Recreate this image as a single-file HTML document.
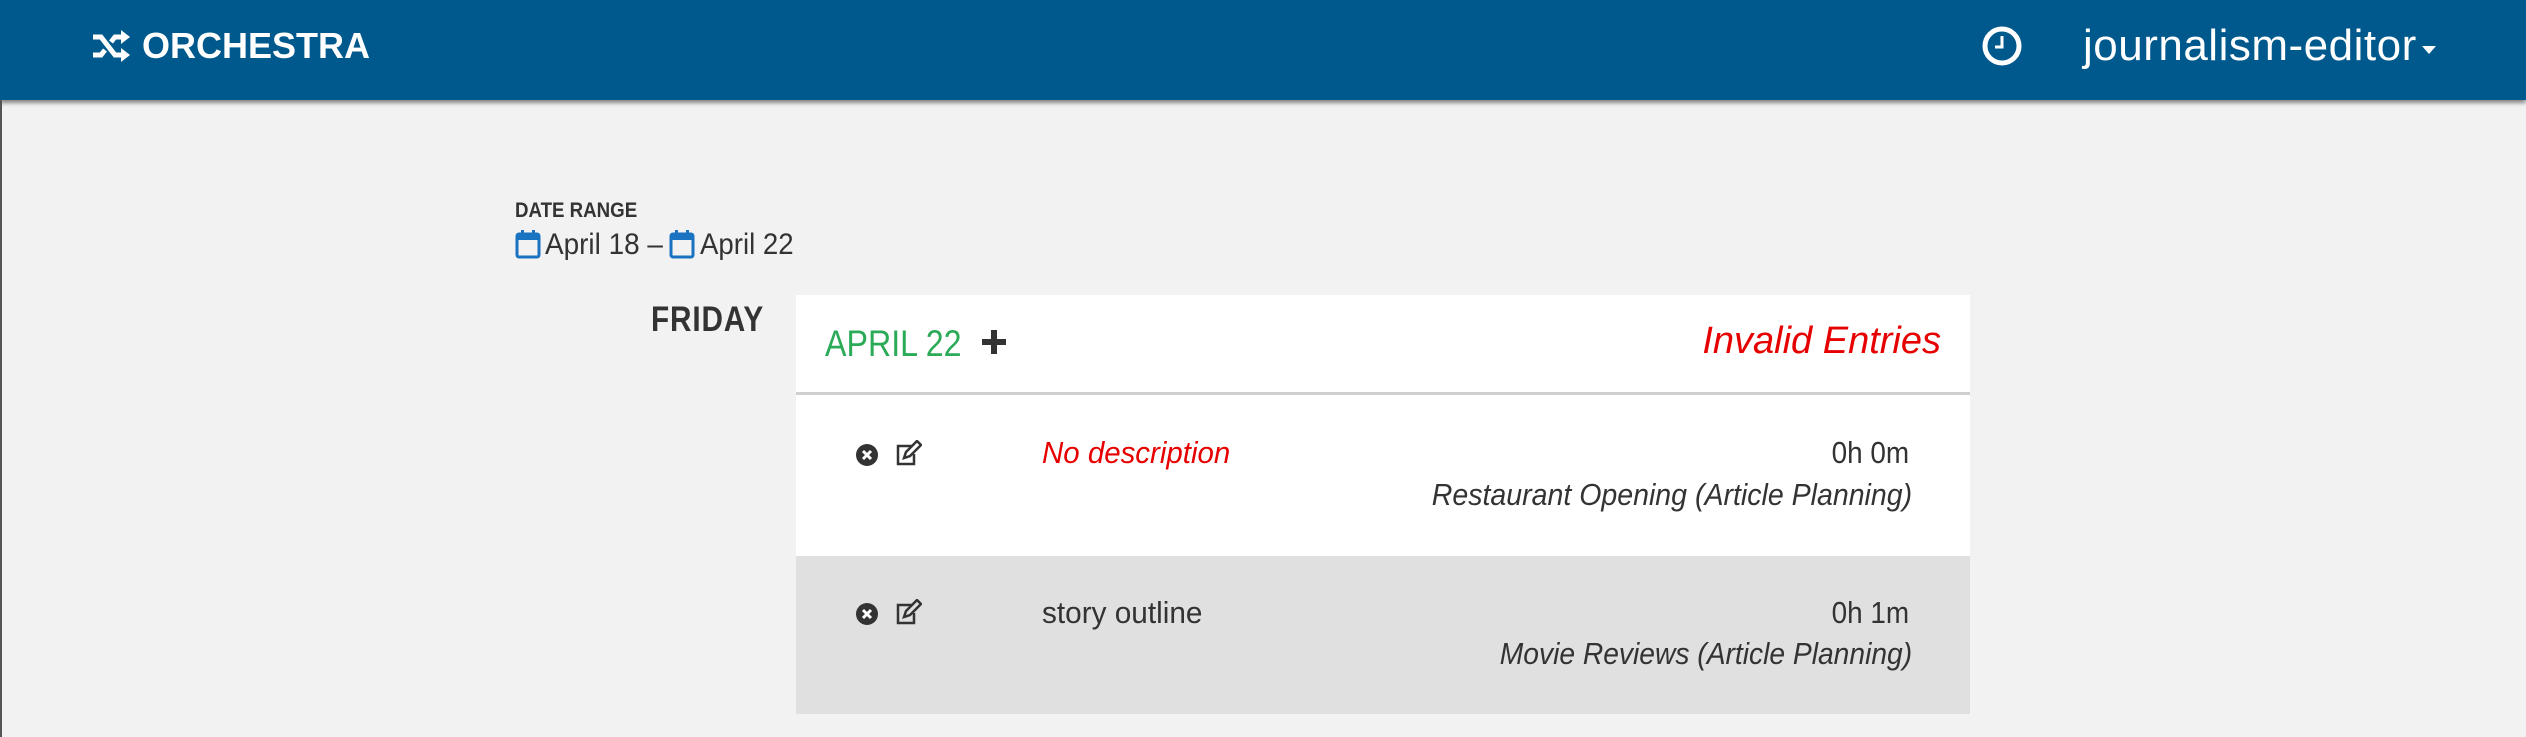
<!DOCTYPE html>
<html><head><meta charset="utf-8"><style>
*{margin:0;padding:0;box-sizing:border-box}
html,body{width:2526px;height:737px;overflow:hidden;background:#f2f2f2;font-family:"Liberation Sans",sans-serif;color:#333}
.nav{position:absolute;left:0;top:0;width:2526px;height:100px;background:#00598c;box-shadow:0 3px 4px rgba(0,0,0,.45)}
.lb{position:absolute;left:0;top:100px;width:2px;height:637px;background:#555}
.abs{position:absolute;white-space:nowrap}
.l{transform-origin:left center}
.r{transform-origin:right center}
.logo{left:142px;top:25px;font-weight:bold;font-size:36px;color:#fff;transform:scaleX(1.0)}
.user{left:2083px;top:21px;font-size:44px;color:#fff;letter-spacing:0.5px}
.card{position:absolute;left:796px;top:295px;width:1174px;height:419px;background:#fff}
.hdr{position:absolute;left:0;top:0;width:100%;height:100px;border-bottom:3px solid #cfcfcf}
.r2{position:absolute;left:0;top:261px;width:100%;height:158px;background:#e0e0e0}
</style></head><body>
<div class="nav"></div>
<div class="lb"></div>
<svg class="abs" style="left:91px;top:30px" width="40" height="32" viewBox="0 0 40 32"><path d="M2 7h8l14 18h8M2 25h8l4-5M20 12l4-5h8" fill="none" stroke="#fff" stroke-width="5"/><path d="M30 0l9 7-9 7zM30 18l9 7-9 7z" fill="#fff"/></svg>
<div class="abs logo l">ORCHESTRA</div>
<svg class="abs" style="left:1981px;top:25px" width="42" height="42" viewBox="0 0 42 42"><circle cx="21" cy="21" r="17" fill="none" stroke="#fff" stroke-width="5"/><path d="M21 11v11h-7" fill="none" stroke="#fff" stroke-width="3"/></svg>
<div class="abs user">journalism-editor</div>
<div class="abs" style="left:2422px;top:46px;width:0;height:0;border-left:7px solid transparent;border-right:7px solid transparent;border-top:8px solid #fff"></div>

<div class="abs l" style="left:515px;top:199px;font-size:21px;font-weight:bold;color:#333;transform:scaleX(0.89)">DATE RANGE</div>
<svg class="abs" style="left:515px;top:229px" width="26" height="30" viewBox="0 0 26 30"><rect x="2" y="5" width="22" height="23" rx="2" fill="none" stroke="#1a73c0" stroke-width="3"/><rect x="2" y="5" width="22" height="6" fill="#1a73c0"/><rect x="6" y="1" width="3" height="7" fill="#1a73c0"/><rect x="17" y="1" width="3" height="7" fill="#1a73c0"/></svg>
<div class="abs l" style="left:545px;top:228px;font-size:30px;color:#333;transform:scaleX(0.93)">April 18 –</div>
<svg class="abs" style="left:669px;top:229px" width="26" height="30" viewBox="0 0 26 30"><rect x="2" y="5" width="22" height="23" rx="2" fill="none" stroke="#1a73c0" stroke-width="3"/><rect x="2" y="5" width="22" height="6" fill="#1a73c0"/><rect x="6" y="1" width="3" height="7" fill="#1a73c0"/><rect x="17" y="1" width="3" height="7" fill="#1a73c0"/></svg>
<div class="abs l" style="left:700px;top:228px;font-size:30px;color:#333;transform:scaleX(0.92)">April 22</div>

<div class="abs l" style="left:651px;top:300px;font-size:35px;font-weight:bold;color:#333;letter-spacing:1px;transform:scaleX(0.85)">FRIDAY</div>

<div class="card">
 <div class="hdr"></div>
 <div class="abs l" style="left:29px;top:28px;font-size:37px;color:#2bab58;transform:scaleX(0.87)">APRIL 22</div>
 <svg class="abs" style="left:185px;top:34px" width="26" height="26" viewBox="0 0 26 26"><path d="M13 1v24M1 13h24" stroke="#333" stroke-width="6"/></svg>
 <div class="abs r" style="right:29px;top:25px;font-size:38px;font-style:italic;color:#e60000">Invalid Entries</div>
 <div class="r2"></div>
 <svg class="abs" style="left:59px;top:148px" width="24" height="24" viewBox="0 0 24 24"><circle cx="12" cy="12" r="11" fill="#333"/><path d="M8 8l8 8M16 8l-8 8" stroke="#fff" stroke-width="3"/></svg>
 <svg class="abs" style="left:98px;top:145px" width="28" height="28" viewBox="0 0 28 28"><path d="M18 6H4v18h16V14" fill="none" stroke="#333" stroke-width="2.5"/><path d="M10 18l2-6 11-11 4 4-11 11z" fill="none" stroke="#333" stroke-width="2.5"/></svg>
 <div class="abs l" style="left:246px;top:140px;font-size:31px;font-style:italic;color:#e60000;transform:scaleX(0.95)">No description</div>
 <div class="abs r" style="right:61px;top:140px;font-size:31px;color:#333;transform:scaleX(0.9)">0h 0m</div>
 <div class="abs r" style="right:58px;top:182px;font-size:31px;font-style:italic;color:#333;transform:scaleX(0.92)">Restaurant Opening (Article Planning)</div>
 <svg class="abs" style="left:59px;top:307px" width="24" height="24" viewBox="0 0 24 24"><circle cx="12" cy="12" r="11" fill="#333"/><path d="M8 8l8 8M16 8l-8 8" stroke="#fff" stroke-width="3"/></svg>
 <svg class="abs" style="left:98px;top:304px" width="28" height="28" viewBox="0 0 28 28"><path d="M18 6H4v18h16V14" fill="none" stroke="#333" stroke-width="2.5"/><path d="M10 18l2-6 11-11 4 4-11 11z" fill="none" stroke="#333" stroke-width="2.5"/></svg>
 <div class="abs l" style="left:246px;top:300px;font-size:31px;color:#333;transform:scaleX(0.96)">story outline</div>
 <div class="abs r" style="right:61px;top:300px;font-size:31px;color:#333;transform:scaleX(0.9)">0h 1m</div>
 <div class="abs r" style="right:58px;top:341px;font-size:31px;font-style:italic;color:#333;transform:scaleX(0.91)">Movie Reviews (Article Planning)</div>
</div>
</body></html>
